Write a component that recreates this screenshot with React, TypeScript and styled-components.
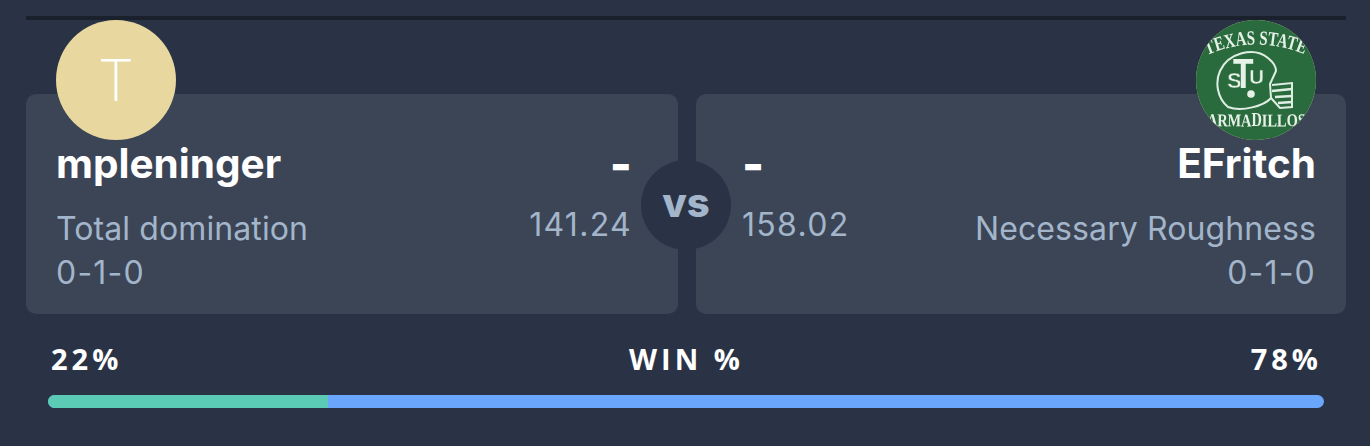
import { FC } from "react";
import styled, { createGlobalStyle } from "styled-components";

const GlobalStyle = createGlobalStyle`
html, body {
    margin: 0;
    padding: 0;
    background: #2a3345;
    font-family: "Inter", "Open Sans", sans-serif;
}
* { box-sizing: border-box; }
`;

const Page = styled.div`
width: 1370px;
height: 446px;
padding: 16px 24px 0 26px;
overflow: hidden;
`;

const TopRule = styled.div`
height: 4px;
background: #1a202c;
`;

const Matchup = styled.div`
position: relative;
display: grid;
grid-template-columns: 652px 650px;
gap: 18px;
margin-top: 74px;
`;

const Card = styled.div<{ $right?: boolean }>`
position: relative;
display: flex;
flex-direction: ${(p) => (p.$right ? "row-reverse" : "row")};
justify-content: space-between;
height: 220px;
padding: 46px ${(p) => (p.$right ? "30px" : "46px")} 0 ${(p) => (p.$right ? "46px" : "30px")};
background: #3b4556;
border-radius: 10px;
`;

const Avatar = styled.div<{ $right?: boolean }>`
position: absolute;
top: -74px;
${(p) => (p.$right ? "right: 30px;" : "left: 30px;")}
display: flex;
align-items: center;
justify-content: center;
width: 120px;
height: 120px;
border-radius: 50%;
overflow: hidden;
background: #e8d8a0;
color: #fff;
font-size: 58px;
font-weight: 200;
`;

const Owner = styled.div<{ $right?: boolean }>`
display: flex;
flex-direction: column;
align-items: ${(p) => (p.$right ? "flex-end" : "flex-start")};
`;

const Name = styled.div`
color: #fff;
font-size: 40.5px;
font-weight: 700;
line-height: 48px;
`;

const Team = styled.div`
margin-top: 19px;
color: #a3b5ca;
font-size: 32px;
line-height: 44px;
letter-spacing: 0.1px;
`;

const Record = styled.div`
color: #a3b5ca;
font-size: 32px;
line-height: 44px;
letter-spacing: 1.2px;
`;

const Scores = styled.div<{ $right?: boolean }>`
display: flex;
flex-direction: column;
align-items: ${(p) => (p.$right ? "flex-start" : "flex-end")};
`;

const Points = styled.div`
color: #fff;
font-size: 47px;
font-weight: 800;
line-height: 48px;
`;

const Projected = styled.div`
margin-top: 15px;
color: #a3b5ca;
font-size: 32px;
line-height: 44px;
letter-spacing: 1.3px;
`;

const VsBadge = styled.div`
position: absolute;
left: 615px;
top: 66px;
display: flex;
align-items: center;
justify-content: center;
width: 90px;
height: 90px;
border-radius: 50%;
background: #2a3345;
color: #a3b5ca;
font-size: 40px;
font-weight: 800;
padding-bottom: 6px;
`;

const WinSection = styled.div`
padding: 28px 22px 0 22px;
`;

const WinLabels = styled.div`
display: flex;
justify-content: space-between;
padding: 0 2px 0 3px;
color: #fff;
font-size: 29px;
font-weight: 700;
line-height: 34px;
letter-spacing: 4px;
font-family: "Open Sans", sans-serif;
`;

const Bar = styled.div`
display: flex;
height: 13px;
margin-top: 19px;
border-radius: 7px;
overflow: hidden;
background: #6aa6fb;
`;

const BarFill = styled.div`
background: #5ccbb6;
`;

const TexasLogo: FC = () => (
  <svg width="120" height="120" viewBox="0 0 120 120">
    <defs>
      <path id="arcTop" d="M11 35 Q60 14 110 35" />
      <path id="arcBottom" d="M11 106 Q60 107 110 106" />
      <filter id="soft">
        <feGaussianBlur stdDeviation="0.4" />
      </filter>
    </defs>
    <rect width="120" height="120" fill="#2a6b3d" />
    <g filter="url(#soft)">
      <g fill="#e6f1e8" fontFamily="Liberation Serif, serif" fontWeight="700">
        <text fontSize="20">
          <textPath href="#arcTop" textLength="100" lengthAdjust="spacingAndGlyphs">TEXAS STATE</textPath>
        </text>
        <text fontSize="18">
          <textPath href="#arcBottom" textLength="99" lengthAdjust="spacingAndGlyphs">ARMADILLOS</textPath>
        </text>
      </g>
      <g fill="none" stroke="#dfeee2" strokeWidth="2">
        <path d="M32 87 C21 78 19 62 24 51 C32 33 58 26 72 38 C77 42 80 47 80 51 L74 64 L75 78 C68 86 46 92 32 87 Z" />
        <path d="M76 65 L96 63 L96 87 L84 88 L75 78" />
        <path d="M76 71 L96 69 M79 77 L96 76 M82 83 L96 82" strokeWidth="2.6" />
      </g>
      <g fill="#e6f1e8" fontFamily="Liberation Sans, sans-serif" fontWeight="700">
        <text transform="translate(37 68) scale(0.8 1)" fontSize="42">T</text>
        <text x="31" y="68" fontSize="22" stroke="#2a6b3d" strokeWidth="0.5">S</text>
        <text x="53" y="64" fontSize="21" stroke="#2a6b3d" strokeWidth="0.5">U</text>
      </g>
      <circle cx="55" cy="74" r="3.8" fill="#e6f1e8" />
    </g>
  </svg>
);

export default function App() {
  return (
    <>
      <GlobalStyle />
      <Page>
        <TopRule />
        <Matchup>
          <Card>
            <Avatar>T</Avatar>
            <Owner>
              <Name>mpleninger</Name>
              <Team>Total domination</Team>
              <Record>0-1-0</Record>
            </Owner>
            <Scores>
              <Points>-</Points>
              <Projected>141.24</Projected>
            </Scores>
          </Card>
          <Card $right>
            <Avatar $right>
              <TexasLogo />
            </Avatar>
            <Owner $right>
              <Name>EFritch</Name>
              <Team>Necessary Roughness</Team>
              <Record>0-1-0</Record>
            </Owner>
            <Scores $right>
              <Points>-</Points>
              <Projected>158.02</Projected>
            </Scores>
          </Card>
          <VsBadge>vs</VsBadge>
        </Matchup>
        <WinSection>
          <WinLabels>
            <span>22%</span>
            <span>WIN %</span>
            <span>78%</span>
          </WinLabels>
          <Bar>
            <BarFill style={{ width: "21.95%" }} />
          </Bar>
        </WinSection>
      </Page>
    </>
  );
}
